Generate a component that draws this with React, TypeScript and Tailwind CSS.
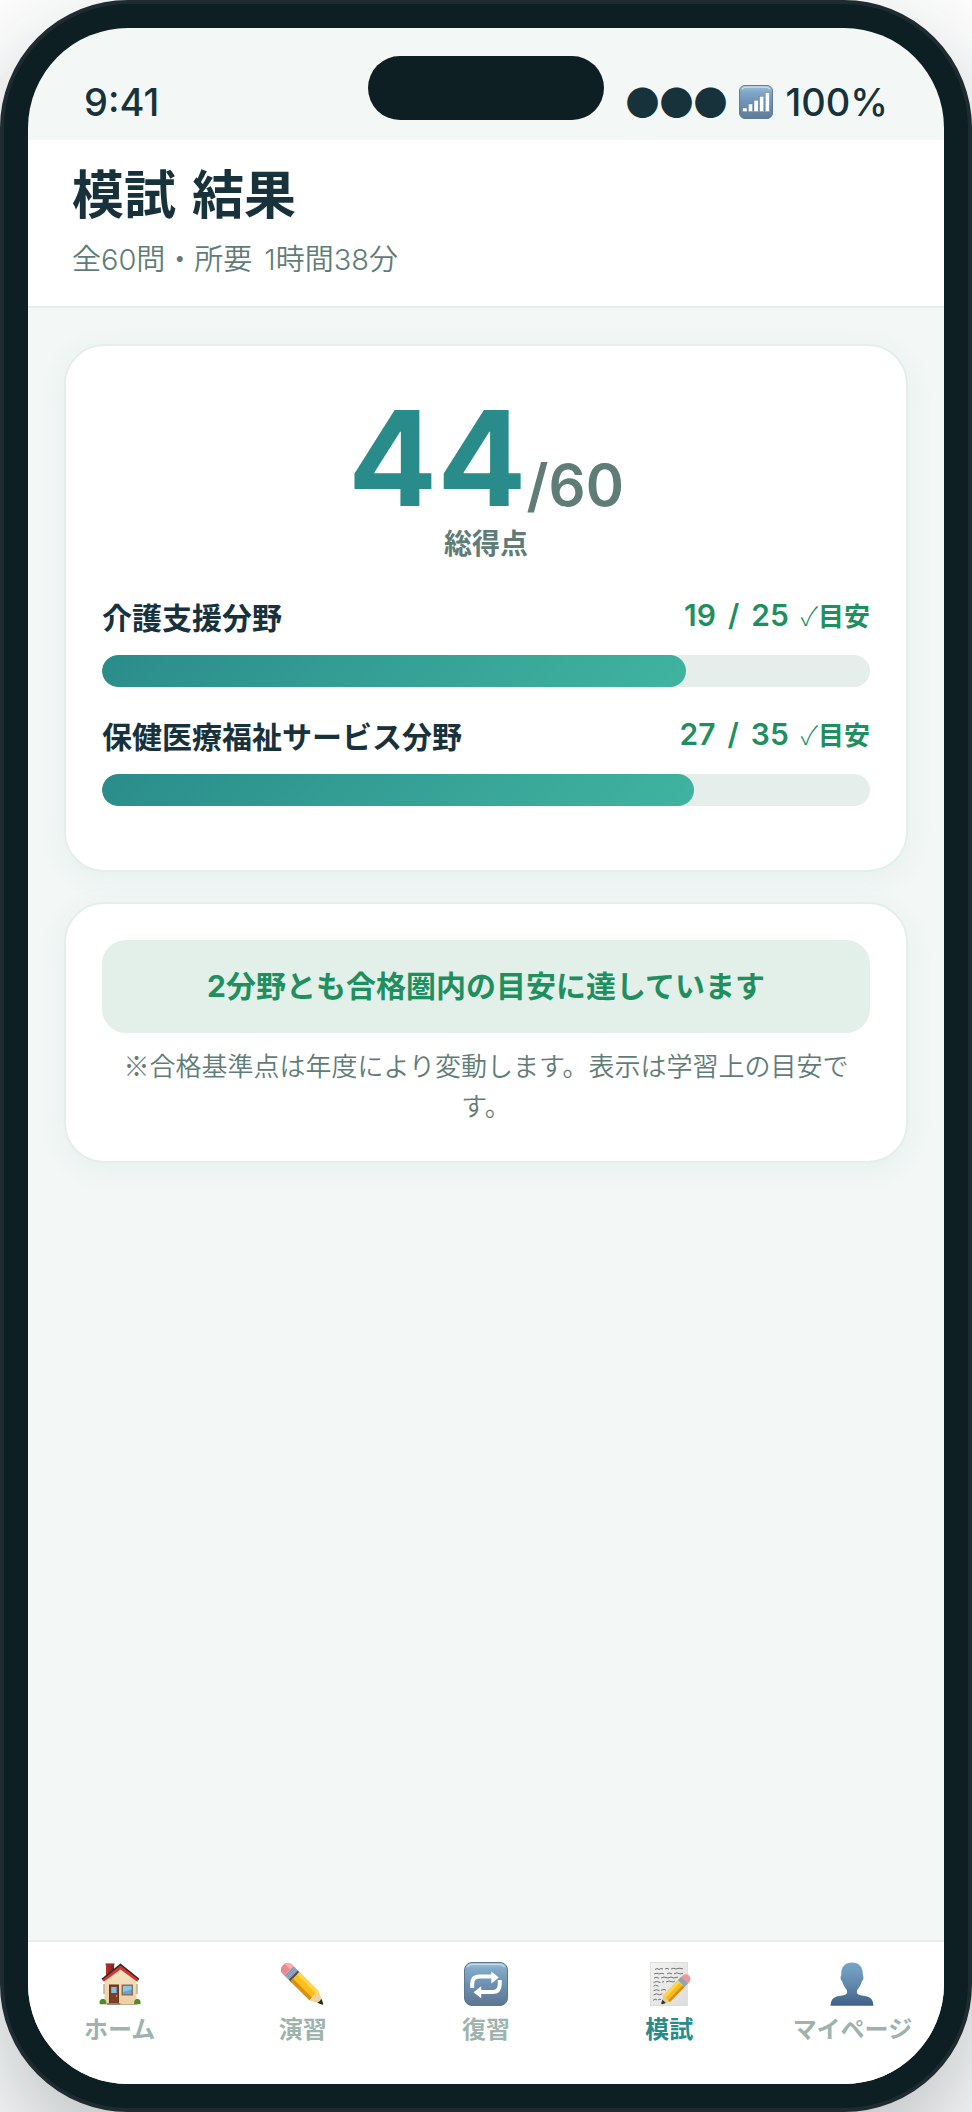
import type { ReactNode } from "react";

function SignalIcon() {
  return (
    <svg viewBox="0 0 34 34" className="size-[34px]" aria-hidden="true">
      <defs>
        <linearGradient id="signal-bg" x1="0" y1="0" x2="0" y2="1">
          <stop offset="0" stopColor="#a9c4d8" />
          <stop offset="0.18" stopColor="#84a9c8" />
          <stop offset="0.45" stopColor="#7196b9" />
          <stop offset="1" stopColor="#607a95" />
        </linearGradient>
      </defs>
      <rect x="0.5" y="0.5" width="33" height="33" rx="5.5" fill="url(#signal-bg)" stroke="#5d7d99" />
      <path d="M3 4.5Q4 2.2 7 2.2H27Q30 2.2 31 4.5" fill="none" stroke="#c9dbe8" strokeWidth="1.2" />
      <g fill="#fff" stroke="#587797" strokeWidth="0.4">
        <rect x="3.8" y="23" width="4.2" height="3.6" />
        <rect x="9.4" y="19" width="4.2" height="7.6" />
        <rect x="15" y="15.2" width="4.2" height="11.4" />
        <rect x="20.6" y="11.4" width="4.2" height="15.2" />
        <rect x="26.2" y="7.6" width="4.2" height="19" />
      </g>
    </svg>
  );
}

function HomeIcon() {
  return (
    <svg viewBox="0 0 44 44" className="size-11" aria-hidden="true">
      <defs>
        <linearGradient id="wall" x1="0" y1="0" x2="0" y2="1">
          <stop offset="0" stopColor="#f7e6c4" />
          <stop offset="1" stopColor="#e9cfa4" />
        </linearGradient>
        <linearGradient id="chimney" x1="0" y1="0" x2="1" y2="0">
          <stop offset="0" stopColor="#b8362f" />
          <stop offset="1" stopColor="#7d1f1c" />
        </linearGradient>
      </defs>
      <rect x="8" y="2" width="8" height="13" fill="url(#chimney)" />
      <rect x="7.6" y="1.4" width="8.8" height="2" fill="#97302b" />
      <path d="M6.5 18 22.5 5.5 38.5 18V42.5H6.5Z" fill="url(#wall)" />
      <path d="M6 22v10M39 22v10" stroke="#a08462" strokeWidth="1" />
      <path d="M22.5 1.6 41.5 16.8 39.6 18.8 22.5 5.4 5.4 18.8 3.5 16.8Z" fill="#2c2a2c" />
      <path d="M22.5 3.4 40.6 17.8 39.2 19.8 22.5 7.4 5.8 19.8 4.4 17.8Z" fill="#d8352f" />
      <rect x="11" y="22.5" width="10" height="19.5" fill="#6b3120" />
      <rect x="12" y="23.5" width="8" height="17.5" fill="#7d3d29" />
      <rect x="13.2" y="25" width="5.4" height="6" fill="#7fc0e6" />
      <circle cx="18.6" cy="34" r="0.8" fill="#e9c04d" />
      <rect x="23.5" y="22.5" width="11.5" height="11" fill="#8d6f57" />
      <rect x="25" y="24" width="8.5" height="8" fill="#5aa7d8" />
      <path d="M25 24h8.5v3.5L25 30Z" fill="#8ac6e8" />
      <path d="M2 42.3c-1.4-3.6 1-6 3-5.3 2.3-.8 3.8 2.6 3.2 5.3Z" fill="#4f8a2c" />
      <path d="M36.4 42.3c-1-3.6 1.2-6 3.2-5.3 2.3-.4 3.6 2.6 2.8 5.3Z" fill="#4f8a2c" />
      <rect x="9" y="41" width="13.5" height="1.9" fill="#8c827a" />
      <path d="M22.5 42.5H39" stroke="#b79a72" strokeWidth="0.8" />
    </svg>
  );
}

function PencilIcon() {
  return (
    <svg viewBox="0 0 44 44" className="size-11" aria-hidden="true">
      <g transform="translate(4.5 5.5) rotate(44.5)">
        <path d="M2-6.5H5V6.5H2Q-3.5 6-3.5 0T2-6.5Z" fill="#e98a90" />
        <path d="M2-6.5H5V-2H-3Q-2-6 2-6.5Z" fill="#f4adb0" />
        <rect x="5" y="-6.5" width="6" height="13" fill="#8298b2" />
        <path d="M7-6.5V6.5M9-6.5V6.5" stroke="#a9bccf" strokeWidth="0.7" />
        <rect x="11" y="-6.5" width="4" height="13" fill="#4c4a4c" />
        <rect x="13" y="-6.5" width="27" height="13" fill="#f9bf1d" />
        <rect x="13" y="-6.5" width="27" height="3.5" fill="#fcd64b" />
        <rect x="13" y="2.8" width="27" height="3.7" fill="#d9920d" />
        <path d="M40-6.5 52-0.8Q52.5 0 52 .8L40 6.5Q42 3.2 39 2.5 42 0 39-2.5 42-4 40-6.5Z" fill="#f1d19c" />
        <path d="M47.5-2.9 52.3-.7Q53 0 52.3.7L47.5 2.9Q48.6 0 47.5-2.9Z" fill="#2b2b2e" />
      </g>
    </svg>
  );
}

function RepeatIcon() {
  return (
    <svg viewBox="0 0 44 44" className="size-11" aria-hidden="true">
      <defs>
        <linearGradient id="repeat-bg" x1="0" y1="0" x2="0" y2="1">
          <stop offset="0" stopColor="#a5c3da" />
          <stop offset="0.15" stopColor="#82a9c8" />
          <stop offset="0.5" stopColor="#6d91b3" />
          <stop offset="1" stopColor="#5c7691" />
        </linearGradient>
      </defs>
      <rect x="0.5" y="0.5" width="43" height="43" rx="7.5" fill="url(#repeat-bg)" stroke="#5a7892" />
      <path d="M3.5 5Q5 2.3 8.5 2.3H35.5Q39 2.3 40.5 5" fill="none" stroke="#c6dae8" strokeWidth="1.2" />
      <path d="M8.2 26V22Q8.2 14.6 15.5 14.6H28" fill="none" stroke="#fff" strokeWidth="4" />
      <path d="M27.3 9.5 34.8 15.5 27.3 21.5Z" fill="#fff" />
      <path d="M35.8 18V22Q35.8 30 28.5 30H16.5" fill="none" stroke="#fff" strokeWidth="4" />
      <path d="M17.2 24.2 9.5 30.2 17.2 36.2Z" fill="#fff" />
    </svg>
  );
}

function MemoIcon() {
  return (
    <svg viewBox="0 0 44 44" className="size-11" aria-hidden="true">
      <defs>
        <linearGradient id="paper" x1="0" y1="0" x2="1" y2="1">
          <stop offset="0" stopColor="#f4f4f3" />
          <stop offset="1" stopColor="#dcdcda" />
        </linearGradient>
      </defs>
      <rect x="3.3" y="0.3" width="37" height="43.4" fill="url(#paper)" stroke="#d2d2d0" strokeWidth="0.6" />
      <g fill="none" stroke="#66666a" strokeWidth="0.9">
        <path d="M8 7.5l2-1 2 1 2-1 2 .5M18 7l2-.6 2 .8M24 7l2-.8 3 .8 3-.8 4 .6" />
        <path d="M7 12l3-.8 2 .8 3-.8 2 .8M20 12l2-1 3 .8M27 11.8l3-1 3 1 3-.4" />
        <path d="M7 16.2l2-1 3 1M14 16l3-1 4 1 3-1 3 1 4-1" />
        <path d="M6.5 20.5l3-1 4 1M15 20.2l2-.7M19 20l3-1 4 1 2-1" />
        <path d="M6.5 24.2l2-1 3 1" />
        <path d="M6.5 28.7l3-1 3 1M14 28.3l3-1 2 1" />
        <path d="M6.5 33l3-1.2 3 1 3-1" />
        <path d="M6 38.5l2-1.5 2 1M11 38l2-1 1 1" />
      </g>
      <g transform="translate(40 15.6) rotate(134) scale(0.93 1.05)">
        <path d="M2-4.5H5V4.5H2Q-3 4-3 0T2-4.5Z" fill="#ee969b" />
        <rect x="4" y="-4.5" width="5" height="9" fill="#8ea2b8" />
        <rect x="9" y="-4.5" width="23" height="9" fill="#f7bb20" />
        <rect x="9" y="1.5" width="23" height="3" fill="#fbd552" />
        <rect x="9" y="-4.5" width="23" height="2.4" fill="#d6900f" />
        <path d="M31-4.5 39-.7Q39.5 0 39 .7L31 4.5 32.5 1.5 31 0 32.5-1.5Z" fill="#eac88f" />
        <path d="M35.5-2.3 39.2-.6 39.2.6 35.5 2.3Z" fill="#2f2f31" />
      </g>
    </svg>
  );
}

function PersonIcon() {
  return (
    <svg viewBox="0 0 44 44" className="size-11" aria-hidden="true">
      <defs>
        <linearGradient id="person" x1="0" y1="0" x2="0" y2="1">
          <stop offset="0" stopColor="#78a6c8" />
          <stop offset="0.5" stopColor="#6389ae" />
          <stop offset="1" stopColor="#3f6088" />
        </linearGradient>
      </defs>
      <path
        d="M22 .6C29 .6 33 5 32.8 12.5C32.8 13.8 33.5 14.2 33.5 15.5C33.5 17.5 32.5 18.5 31.8 19.5C31 23 29 25.5 27.5 27.5C26.5 29.5 26.7 31.5 28 32.3C31 34 35.5 33.6 39 35.2C42.5 36.8 43.2 40 43.4 43.7H.6C.8 40 1.5 36.8 5 35.2C8.5 33.6 13 34 16 32.3C17.3 31.5 17.5 29.5 16.5 27.5C15 25.5 13 23 12.2 19.5C11.5 18.5 10.5 17.5 10.5 15.5C10.5 14.2 11.2 13.8 11.2 12.5C11 5 15 .6 22 .6Z"
        fill="url(#person)"
      />
    </svg>
  );
}

const sections = [
  { label: "介護支援分野", score: 19, total: 25 },
  { label: "保健医療福祉サービス分野", score: 27, total: 35 },
];

const tabs: { label: string; icon: ReactNode; active?: boolean }[] = [
  { label: "ホーム", icon: <HomeIcon /> },
  { label: "演習", icon: <PencilIcon /> },
  { label: "復習", icon: <RepeatIcon /> },
  { label: "模試", icon: <MemoIcon />, active: true },
  { label: "マイページ", icon: <PersonIcon /> },
];

const card =
  "rounded-[40px] border-2 border-[#e4eeeb] bg-white p-9 shadow-[0_6px_28px_rgba(42,150,125,0.07)]";

export default function App() {
  return (
    <div className="min-h-screen overflow-hidden bg-white font-['Inter','Noto_Sans_CJK_JP',sans-serif] text-[#18323c]">
      <div className="flex min-h-screen rounded-[128px] border-4 border-[#1e2c31] bg-[#0d1f23] p-6 shadow-[0_48px_120px_rgba(13,31,35,0.3)]">
        <div className="relative flex grow flex-col overflow-hidden rounded-[100px] bg-[#f3f7f6]">
          <div className="absolute top-7 left-1/2 h-16 w-[236px] -translate-x-1/2 rounded-full bg-[#0d1f23]" />

          <div className="flex h-28 items-end justify-between px-14 pb-4 text-[38px] leading-[44px] font-medium">
            <span>9:41</span>
            <span className="flex items-center gap-3">
              <span className="font-['Noto_Sans_CJK_JP'] text-[34px] font-normal">●●●</span>
              <SignalIcon />
              <span>100%</span>
            </span>
          </div>

          <header className="border-b-2 border-[#e4eeeb] bg-white px-11 pt-6 pb-[26px]">
            <h1 className="flex gap-4 text-[52px] leading-[64px] font-bold">
              <span>模試</span> <span>結果</span>
            </h1>
            <p className="mt-3 flex gap-3 text-[29px] leading-[40px] font-[350] text-[#5f7d76]">
              <span>全60問・所要</span> <span>1時間38分</span>
            </p>
          </header>

          <main className="flex grow flex-col gap-[30px] p-9">
            <section className={card}>
              <div className="flex items-baseline justify-center pt-[10px] leading-none">
                <span className="text-[132px] leading-[132px] font-bold text-[#2a8c8a]">44</span>
                <span className="text-[58px] leading-[58px] font-semibold text-[#5f7d76]">/60</span>
              </div>
              <p className="text-center text-[28px] leading-[40px] font-bold text-[#5f7d76]">
                総得点
              </p>
              <div className="mt-8">
                {sections.map((s) => (
                  <div key={s.label} className="mb-7">
                    <div className="mb-[15px] flex items-start justify-between">
                      <span className="text-[30px] leading-[44px] font-bold">{s.label}</span>
                      <span className="flex items-baseline gap-3 text-[30px] leading-[38px] font-semibold text-[#1f8f5f]">
                        <span>{s.score}</span> <span>/</span> <span>{s.total}</span>{" "}
                        <span className="font-['Noto_Sans_CJK_JP'] text-[26px] font-bold">
                          <span className="font-light">✓</span>目安
                        </span>
                      </span>
                    </div>
                    <div
                      role="progressbar"
                      aria-label={s.label}
                      aria-valuenow={s.score}
                      aria-valuemin={0}
                      aria-valuemax={s.total}
                      className="h-8 overflow-hidden rounded-full bg-[#e6eeeb]"
                    >
                      <div
                        className="h-full rounded-full bg-[linear-gradient(135deg,#2a8c8a,#40b4a0)]"
                        style={{ width: `${(s.score / s.total) * 100}%` }}
                      />
                    </div>
                  </div>
                ))}
              </div>
            </section>

            <section className={card}>
              <p className="rounded-[24px] bg-[#e3f0ea] py-6 text-center text-[30px] leading-[45px] font-bold text-[#1f8f5f]">
                2分野とも合格圏内の目安に達しています
              </p>
              <p className="mt-3 text-center font-['Noto_Sans_CJK_JP',sans-serif] text-[26px] leading-[40px] font-[350] text-[#5f7d76]">
                ※合格基準点は年度により変動します。表示は学習上の目安です。
              </p>
            </section>
          </main>

          <nav className="grid grid-cols-5 border-t-2 border-[#e4eeeb] bg-white pt-5 pb-[38px]">
            {tabs.map((t) => (
              <button
                key={t.label}
                type="button"
                aria-current={t.active ? "page" : undefined}
                className={
                  t.active
                    ? "flex flex-col items-center gap-2 text-[24px] leading-[32px] font-bold whitespace-nowrap text-[#2a8c8a]"
                    : "flex flex-col items-center gap-2 text-[24px] leading-[32px] font-bold whitespace-nowrap text-[#9db3ad]"
                }
              >
                {t.icon}
                <span>{t.label}</span>
              </button>
            ))}
          </nav>
        </div>
      </div>
    </div>
  );
}
